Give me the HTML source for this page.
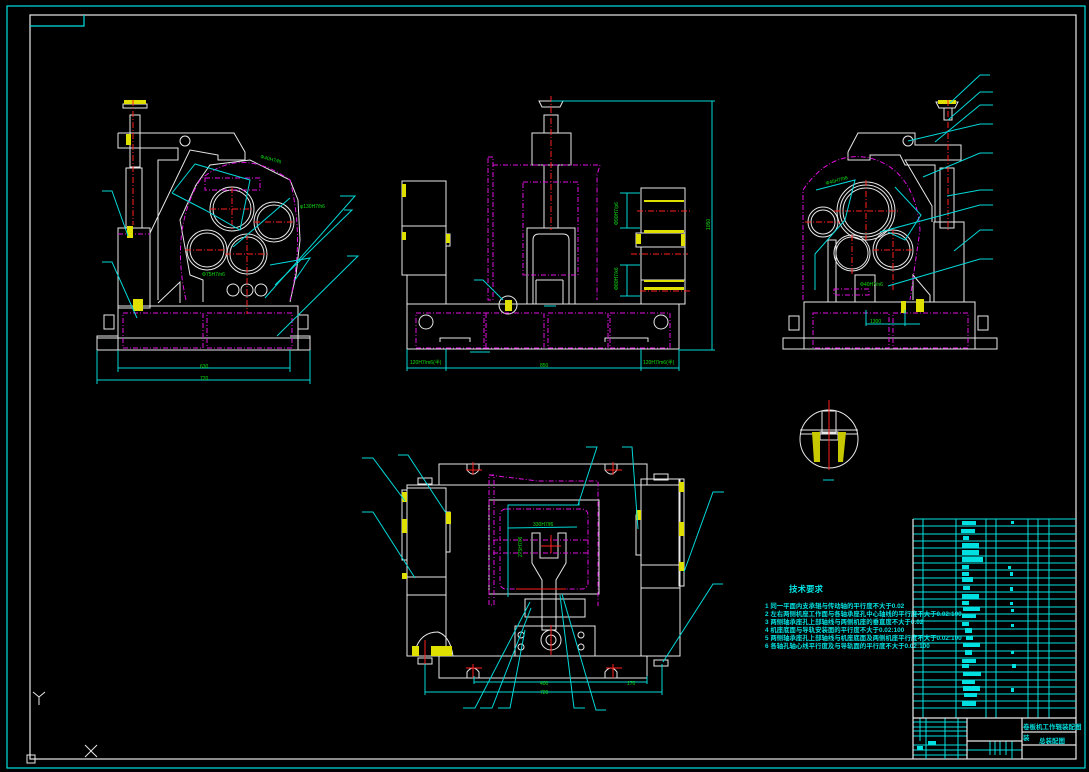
<!DOCTYPE html>
<html><head><meta charset="utf-8"><style>
html,body{margin:0;padding:0;background:#000;}
svg{display:block}
text{font-family:"Liberation Sans","Noto Sans CJK SC",sans-serif;}
</style></head><body>
<svg width="1089" height="772" viewBox="0 0 1089 772" xmlns="http://www.w3.org/2000/svg">
<rect width="1089" height="772" fill="#000"/>
<!-- frames -->
<rect x="7" y="6" width="1078" height="762" fill="none" stroke="#00e0e0" stroke-width="1.2"/>
<rect x="30" y="15" width="1046" height="744" fill="none" stroke="#e8e8e8" stroke-width="1.2"/>
<polyline points="30,26 84,26 84,15" fill="none" stroke="#00e0e0" stroke-width="1.2"/>
<!-- UCS -->
<g stroke="#e8e8e8" fill="none" stroke-width="1">
<rect x="27" y="755" width="8" height="8"/>
<line x1="33" y1="692" x2="39" y2="697"/><line x1="45" y1="692" x2="39" y2="697"/><line x1="39" y1="697" x2="39" y2="705"/>
<line x1="85" y1="745" x2="97" y2="757"/><line x1="97" y1="745" x2="85" y2="757"/>
</g>

<!-- ========== LEFT VIEW ========== -->
<g fill="none" stroke="#e8e8e8" stroke-width="1">
<rect x="97" y="338" width="213" height="12"/>
<polyline points="97,338 97,336 118,336"/><polyline points="310,338 310,336 290,336"/>
<rect x="118" y="306" width="180" height="44"/>
<rect x="118" y="228" width="32" height="80"/>
<rect x="126" y="168" width="16" height="60"/>
<polyline points="118,133 234,133 245,152 245,160 218,160 218,155 190,150 150,233 150,306"/>
<polyline points="118,133 118,148 178,148 178,160 158,160 158,300"/>
<rect x="130" y="115" width="10" height="52"/>
<path d="M123 104 h24 v4 h-24z"/>
<circle cx="185" cy="141" r="5"/>
<rect x="104" y="315" width="10" height="14"/><rect x="298" y="315" width="10" height="14"/>
<polyline points="158,303 180,282 180,303"/>
<circle cx="232" cy="209" r="22"/><circle cx="232" cy="209" r="19"/>
<circle cx="274" cy="222" r="20"/><circle cx="274" cy="222" r="17"/>
<circle cx="207" cy="250" r="20"/><circle cx="207" cy="250" r="17"/>
<circle cx="247" cy="254" r="20"/><circle cx="247" cy="254" r="17"/>
<circle cx="233" cy="290" r="6"/><circle cx="247" cy="290" r="6"/><circle cx="261" cy="290" r="6"/>
<polyline points="203,302 203,280 190,275 180,220 196,185 210,165 250,160 290,180 298,200 300,240 296,275 290,302"/>
</g>
<g fill="none" stroke="#e010e0" stroke-width="1" stroke-dasharray="5,2,1,2">
<path d="M186 300 Q170 230 200 180 Q240 145 290 180 Q305 240 290 300"/>
<rect x="123" y="313" width="80" height="35"/><rect x="207" y="313" width="85" height="35"/>
<rect x="205" y="178" width="55" height="12"/>
<line x1="118" y1="234" x2="150" y2="234"/>
</g>
<g fill="#e0e000"><rect x="124" y="100" width="22" height="4"/><rect x="127" y="226" width="6" height="12"/><rect x="133" y="299" width="10" height="12"/><rect x="126" y="134" width="5" height="11"/></g>
<g stroke="#ff2020" stroke-width="1" stroke-dasharray="6,2,1,2">
<line x1="133" y1="100" x2="133" y2="225"/><line x1="210" y1="209" x2="254" y2="209"/><line x1="232" y1="187" x2="232" y2="231"/>
<line x1="254" y1="222" x2="294" y2="222"/><line x1="185" y1="250" x2="229" y2="250"/><line x1="225" y1="254" x2="269" y2="254"/><line x1="247" y1="234" x2="247" y2="314"/>
</g>
<g fill="none" stroke="#00d8d8" stroke-width="1">
<line x1="97" y1="350" x2="97" y2="384"/><line x1="310" y1="350" x2="310" y2="384"/><line x1="118" y1="350" x2="118" y2="372"/><line x1="290" y1="350" x2="290" y2="372"/>
<line x1="118" y1="368" x2="290" y2="368"/><line x1="97" y1="380" x2="310" y2="380"/>
<polyline points="102,191 112,191 128,236"/><polyline points="102,262 112,262 137,318"/>
<polyline points="172,193 195,164 250,180 240,230 205,210 172,193"/>
<polyline points="340,196 355,196 265,298"/><polyline points="344,210 352,210 275,285"/><polyline points="347,256 358,256 277,336"/>
<polyline points="233,247 290,198"/><polyline points="270,265 310,258 295,280"/>
</g>
<g fill="#10e010" font-size="5"><text x="260" y="158" transform="rotate(15 260 158)">Φ40H7/f6</text><text x="300" y="208">φ130H7/h6</text><text x="202" y="276">Φ75H7/n6</text><text x="200" y="368">630</text><text x="200" y="380">720</text></g>

<!-- ========== MIDDLE VIEW ========== -->
<g fill="none" stroke="#e8e8e8" stroke-width="1">
<rect x="407" y="304" width="272" height="45"/>
<rect x="402" y="181" width="44" height="45"/><rect x="402" y="226" width="44" height="49"/>
<rect x="407" y="275" width="39" height="29"/>
<rect x="446" y="234" width="4" height="12"/>
<rect x="527" y="228" width="48" height="76"/>
<path d="M533 304 V240 Q533 234 539 234 H563 Q569 234 569 240 V304"/>
<rect x="532" y="133" width="39" height="32"/>
<rect x="544" y="115" width="14" height="18"/><rect x="544" y="165" width="14" height="63"/>
<path d="M539 101 h24 l-3 6 h-18z"/>
<rect x="641" y="188" width="44" height="45"/><rect x="636" y="233" width="49" height="14"/>
<rect x="641" y="247" width="44" height="33"/><rect x="641" y="280" width="44" height="24"/>
<circle cx="426" cy="322" r="7"/><circle cx="661" cy="322" r="7"/>
<polyline points="440,342 440,338 470,338 470,342"/><polyline points="605,342 605,338 648,338 648,342"/>
<line x1="536" y1="280" x2="536" y2="304"/><line x1="563" y1="280" x2="563" y2="304"/><line x1="536" y1="280" x2="563" y2="280"/>
<circle cx="508" cy="305" r="9"/>
</g>
<g fill="none" stroke="#e010e0" stroke-width="1" stroke-dasharray="5,2,1,2">
<rect x="488" y="157" width="5" height="143"/>
<polyline points="493,165 600,165 597,175 597,300"/>
<rect x="523" y="182" width="55" height="93"/>
<rect x="416" y="313" width="70" height="35"/><rect x="484" y="313" width="60" height="35"/><rect x="548" y="313" width="60" height="35"/><rect x="610" y="313" width="60" height="35"/>
</g>
<g fill="#e0e000"><rect x="402" y="184" width="4" height="13"/><rect x="402" y="232" width="4" height="8"/><rect x="446" y="234" width="4" height="9"/><rect x="636" y="234" width="5" height="10"/><rect x="644" y="230" width="40" height="3"/><rect x="681" y="234" width="4" height="12"/><rect x="644" y="280" width="40" height="2"/><rect x="644" y="287" width="40" height="3"/><rect x="644" y="200" width="40" height="2"/><rect x="505" y="300" width="7" height="11"/></g>
<g stroke="#ff2020" stroke-width="1" stroke-dasharray="6,2,1,2">
<line x1="551" y1="96" x2="551" y2="230"/><line x1="637" y1="211" x2="690" y2="211"/><line x1="631" y1="254" x2="688" y2="254"/><line x1="640" y1="291" x2="690" y2="291"/>
</g>
<g fill="none" stroke="#00d8d8" stroke-width="1">
<line x1="551" y1="101" x2="715" y2="101"/><line x1="712" y1="101" x2="712" y2="350"/><line x1="679" y1="350" x2="715" y2="350"/>
<line x1="407" y1="349" x2="407" y2="371"/><line x1="679" y1="349" x2="679" y2="371"/><line x1="446" y1="349" x2="446" y2="371"/><line x1="641" y1="349" x2="641" y2="371"/>
<line x1="407" y1="368" x2="679" y2="368"/>
<line x1="620" y1="193" x2="640" y2="193"/><line x1="620" y1="228" x2="640" y2="228"/><line x1="627" y1="193" x2="627" y2="228"/>
<line x1="620" y1="265" x2="640" y2="265"/><line x1="620" y1="296" x2="640" y2="296"/><line x1="627" y1="265" x2="627" y2="296"/>
<polyline points="474,280 483,280 503,300"/>
<line x1="544" y1="306" x2="556" y2="306"/><line x1="470" y1="352" x2="490" y2="352"/>
</g>
<g fill="#10e010" font-size="5"><text x="410" y="364">120H7/m6(半)</text><text x="540" y="367">850</text><text x="643" y="364">120H7/m6(半)</text><text x="710" y="230" transform="rotate(-90 710 230)">1050</text><text x="618" y="225" transform="rotate(-90 618 225)">Φ90H7/p6</text><text x="618" y="290" transform="rotate(-90 618 290)">Φ80H7/k6</text></g>

<!-- ========== RIGHT VIEW ========== -->
<g fill="none" stroke="#e8e8e8" stroke-width="1">
<rect x="783" y="338" width="214" height="11"/>
<rect x="804" y="302" width="171" height="47"/>
<rect x="934" y="222" width="30" height="80"/>
<rect x="940" y="168" width="14" height="60"/>
<polyline points="848,152 858,133 915,133 915,145 961,145 961,160 915,160 905,160 932,206 932,222"/>
<polyline points="848,152 848,160 870,160 870,155 900,155 905,165 935,165 935,222"/>
<circle cx="908" cy="141" r="5"/>
<path d="M936 102 h22 l-3 6 h-16z"/><rect x="944" y="108" width="8" height="12"/>
<rect x="789" y="316" width="10" height="14"/><rect x="978" y="316" width="10" height="14"/>
<circle cx="866" cy="211" r="29"/><circle cx="866" cy="211" r="26"/><circle cx="866" cy="211" r="23"/>
<circle cx="823" cy="222" r="15"/><circle cx="823" cy="222" r="12"/>
<circle cx="852" cy="253" r="18"/><circle cx="852" cy="253" r="16"/>
<circle cx="893" cy="250" r="20"/><circle cx="893" cy="250" r="17"/>
<polyline points="828,302 828,240 836,240 836,302"/><polyline points="855,302 855,275 875,275 875,302"/>
<polyline points="913,300 913,275 930,295 930,302"/>
</g>
<g fill="none" stroke="#e010e0" stroke-width="1" stroke-dasharray="5,2,1,2">
<path d="M803 300 V190 Q830 150 870 158 Q915 170 920 230 L910 300"/>
<rect x="813" y="313" width="76" height="35"/><rect x="893" y="313" width="75" height="35"/>
<rect x="834" y="289" width="35" height="6"/>
</g>
<g fill="#e0e000"><rect x="901" y="301" width="5" height="12"/><rect x="916" y="299" width="8" height="13"/><rect x="938" y="100" width="18" height="4"/></g>
<g stroke="#ff2020" stroke-width="1" stroke-dasharray="6,2,1,2">
<line x1="948" y1="100" x2="948" y2="230"/><line x1="834" y1="211" x2="898" y2="211"/><line x1="866" y1="180" x2="866" y2="240"/>
<line x1="805" y1="222" x2="840" y2="222"/><line x1="873" y1="250" x2="913" y2="250"/><line x1="893" y1="230" x2="893" y2="290"/><line x1="852" y1="235" x2="852" y2="275"/>
</g>
<g fill="none" stroke="#00d8d8" stroke-width="1">
<polyline points="990,75 980,75 950,103"/><polyline points="993,92 980,92 948,120"/><polyline points="993,105 980,105 935,142"/><polyline points="993,124 980,124 908,141"/>
<polyline points="993,153 980,153 923,177"/><polyline points="993,190 980,190 947,196"/><polyline points="993,205 980,205 880,232"/>
<polyline points="993,230 980,230 954,251"/><polyline points="993,259 980,259 888,286"/>
<polyline points="816,190 855,180 845,220 815,254 815,255 815,290"/>
<line x1="866" y1="310" x2="866" y2="326"/><line x1="905" y1="310" x2="905" y2="326"/><line x1="866" y1="324" x2="920" y2="324"/>
<polyline points="895,187 921,215 905,240 888,232"/>
</g>
<g fill="#10e010" font-size="5"><text x="826" y="185" transform="rotate(-15 826 185)">Φ45H7/h6</text><text x="860" y="286">Φ40H7/n6</text><text x="870" y="323">1300</text></g>

<!-- detail circle -->
<g fill="none" stroke="#e8e8e8" stroke-width="1">
<circle cx="829" cy="439" r="29"/><line x1="800" y1="430" x2="858" y2="430"/><line x1="800" y1="434" x2="858" y2="434"/>
<rect x="822" y="411" width="14" height="22"/><rect x="820" y="432" width="18" height="8"/>
</g>
<path d="M812 432 L820 432 L820 462 L814 462Z M838 432 L846 432 L843 462 L838 462Z" fill="#c8c800"/>
<line x1="829" y1="400" x2="829" y2="470" stroke="#ff2020" stroke-width="1"/>
<line x1="823" y1="480" x2="834" y2="480" stroke="#00d8d8"/>

<!-- ========== BOTTOM VIEW ========== -->
<g fill="none" stroke="#e8e8e8" stroke-width="1">
<rect x="439" y="464" width="208" height="21"/>
<rect x="407" y="485" width="273" height="171"/>
<rect x="439" y="656" width="208" height="22"/>
<rect x="407" y="488" width="39" height="168"/><rect x="641" y="479" width="39" height="177"/>
<rect x="402" y="490" width="5" height="70"/><rect x="679" y="479" width="5" height="107"/>
<rect x="446" y="512" width="4" height="40"/><rect x="636" y="515" width="5" height="40"/>
<line x1="407" y1="577" x2="446" y2="577"/><line x1="407" y1="595" x2="446" y2="595"/><line x1="641" y1="565" x2="680" y2="565"/><line x1="641" y1="588" x2="680" y2="588"/>
<rect x="489" y="500" width="110" height="94"/>
<path d="M532 533 h8 v25 h18 v-25 h8 v30 l-10 17 v50 h-14 v-50 l-10 -17z"/>
<rect x="525" y="599" width="60" height="18"/><rect x="515" y="626" width="80" height="30"/>
<circle cx="551" cy="640" r="10"/><circle cx="551" cy="640" r="5"/>
<circle cx="521" cy="635" r="3"/><circle cx="521" cy="647" r="3"/><circle cx="581" cy="635" r="3"/><circle cx="581" cy="647" r="3"/>
<path d="M414 656 Q418 632 438 632 Q450 636 453 656"/>
<path d="M418 478 h14 v6 h-14z M654 474 h14 v6 h-14z M418 658 h14 v6 h-14z M654 660 h14 v6 h-14z"/>
<path d="M467 464 v6 q6 8 12 0 v-6 M605 464 v6 q6 8 12 0 v-6 M467 678 v-6 q6 -8 12 0 v6 M605 678 v-6 q6 -8 12 0 v6"/>
</g>
<g fill="none" stroke="#e010e0" stroke-width="1" stroke-dasharray="5,2,1,2">
<polyline points="489,475 538,481 598,481 598,606"/>
<rect x="489" y="475" width="5" height="130"/>
<rect x="500" y="509" width="88" height="80" rx="6"/>
<line x1="493" y1="540" x2="590" y2="540"/><line x1="493" y1="553" x2="590" y2="553"/>
</g>
<g fill="#e0e000"><rect x="402" y="492" width="5" height="10"/><rect x="402" y="519" width="5" height="14"/><rect x="402" y="573" width="5" height="6"/><rect x="446" y="512" width="5" height="12"/><rect x="636" y="510" width="5" height="10"/><rect x="679" y="482" width="5" height="10"/><rect x="679" y="522" width="5" height="14"/><rect x="679" y="562" width="5" height="9"/><rect x="412" y="646" width="7" height="10"/><rect x="431" y="646" width="21" height="10"/></g>
<g stroke="#ff2020" stroke-width="1">
<line x1="473" y1="462" x2="473" y2="475"/><line x1="466" y1="470" x2="482" y2="470"/><line x1="613" y1="462" x2="613" y2="475"/><line x1="606" y1="470" x2="622" y2="470"/>
<line x1="473" y1="664" x2="473" y2="678"/><line x1="466" y1="668" x2="482" y2="668"/><line x1="613" y1="664" x2="613" y2="678"/><line x1="606" y1="668" x2="622" y2="668"/>
<line x1="551" y1="625" x2="551" y2="655"/><line x1="551" y1="535" x2="551" y2="553"/><line x1="541" y1="546" x2="561" y2="546"/><line x1="425" y1="640" x2="425" y2="668"/>
<line x1="516" y1="589" x2="566" y2="589"/>
</g>
<g fill="none" stroke="#00d8d8" stroke-width="1">
<line x1="425" y1="664" x2="425" y2="695"/><line x1="662" y1="664" x2="662" y2="695"/><line x1="425" y1="692" x2="662" y2="692"/>
<line x1="474" y1="676" x2="474" y2="684"/><line x1="647" y1="676" x2="647" y2="684"/><line x1="474" y1="682" x2="647" y2="682"/>
<polyline points="508,597 508,505 579,505 579,500"/><polyline points="508,528 577,527"/>
<polyline points="362,458 373,458 405,501"/><polyline points="398,455 408,455 446,513"/><polyline points="362,512 373,512 415,578"/>
<polyline points="586,447 597,447 578,505"/><polyline points="622,447 632,447 638,529"/>
<polyline points="724,492 713,492 684,572"/><polyline points="723,584 713,584 663,662"/>
<polyline points="463,708 475,708 530,602"/><polyline points="480,708 492,708 531,608"/><polyline points="498,708 510,708 525,630"/>
<polyline points="585,708 574,708 560,595"/><polyline points="606,710 596,710 562,594"/>
</g>
<g fill="#10e010" font-size="5"><text x="533" y="526">330H7/f6</text><text x="522" y="557" transform="rotate(-90 522 557)">275H7/f6</text><text x="540" y="685">400</text><text x="540" y="694">720</text><text x="627" y="685">170</text></g>

<!-- ========== notes ========== -->
<g fill="#00e0e0" font-size="6.4" font-weight="bold">
<text x="789" y="592" font-size="8.5">技术要求</text>
<text x="765" y="608">1  同一平面内支承辊与传动轴的平行度不大于0.02</text>
<text x="765" y="616">2  左右两侧机座工作面与各轴承座孔中心轴线的平行度不大于0.02:100</text>
<text x="765" y="624">3  两侧轴承座孔上部轴线与两侧机座的垂直度不大于0.02</text>
<text x="765" y="632">4  机座底面与导轨安装面的平行度不大于0.02:100</text>
<text x="765" y="640">5  两侧轴承座孔上部轴线与机座底面及两侧机座平行度不大于0.02:100</text>
<text x="765" y="648">6  各轴孔轴心线平行度及与导轨面的平行度不大于0.02:100</text>
</g>

<!-- ========== title table ========== -->
<g stroke="#00e0e0" stroke-width="1" fill="none">
<path d="M913 519 H1076 M913 526 H1076 M913 534 H1076 M913 541 H1076 M913 548 H1076 M913 556 H1076 M913 563 H1076 M913 570 H1076 M913 578 H1076 M913 585 H1076 M913 592 H1076 M913 599 H1076 M913 607 H1076 M913 614 H1076 M913 621 H1076 M913 629 H1076 M913 636 H1076 M913 643 H1076 M913 651 H1076 M913 658 H1076 M913 665 H1076 M913 672 H1076 M913 680 H1076 M913 687 H1076 M913 694 H1076 M913 701 H1076 M913 708 H1076"/>
<path d="M923 519 V718 M956 519 V718 M986 519 V718 M996 519 V718 M1028 519 V718 M1038 519 V718 M1049 519 V718"/>
<path d="M913 722 H967 M913 727 H967 M913 731 H967 M913 736 H967 M913 745 H967 M913 750 H967 M913 755 H967 M967 750 H1022"/>
<path d="M920 718 V741 M926 718 V759 M945 718 V759 M958 718 V759 M990 741 V755 M995 741 V755 M1000 741 V755 M1006 741 V755 M1012 741 V759"/>
</g>
<g stroke="#e8e8e8" stroke-width="1.2" fill="none">
<line x1="913" y1="519" x2="913" y2="759"/><line x1="913" y1="718" x2="1076" y2="718"/>
<line x1="967" y1="718" x2="967" y2="759"/><line x1="1022" y1="718" x2="1022" y2="759"/>
<line x1="967" y1="741" x2="1022" y2="741"/><line x1="1022" y1="732" x2="1076" y2="732"/><line x1="1022" y1="745" x2="1076" y2="745"/>
</g>
<g fill="#00e0e0">
<rect x="962" y="521" width="14" height="4"/><rect x="961" y="529" width="14" height="4"/><rect x="963" y="536" width="6" height="4"/><rect x="962" y="543" width="17" height="5"/><rect x="962" y="550" width="17" height="5"/><rect x="962" y="557" width="21" height="5"/><rect x="962" y="565" width="7" height="4"/><rect x="962" y="572" width="7" height="4"/><rect x="962" y="577" width="11" height="5"/><rect x="963" y="586" width="7" height="4"/><rect x="962" y="594" width="17" height="5"/><rect x="962" y="601" width="7" height="4"/><rect x="963" y="607" width="17" height="4"/><rect x="962" y="614" width="14" height="4"/><rect x="962" y="622" width="7" height="4"/><rect x="965" y="628" width="7" height="5"/><rect x="966" y="636" width="7" height="4"/><rect x="963" y="643" width="17" height="4"/><rect x="965" y="650" width="7" height="5"/><rect x="962" y="659" width="14" height="4"/><rect x="962" y="664" width="7" height="4"/><rect x="963" y="672" width="18" height="4"/><rect x="962" y="680" width="13" height="4"/><rect x="963" y="686" width="17" height="5"/><rect x="964" y="693" width="13" height="4"/><rect x="962" y="701" width="14" height="5"/>
<rect x="1011" y="521" width="3" height="3"/><rect x="1008" y="566" width="3" height="3"/><rect x="1010" y="572" width="3" height="4"/><rect x="1010" y="587" width="3" height="4"/><rect x="1010" y="602" width="3" height="3"/><rect x="1011" y="609" width="3" height="3"/><rect x="1011" y="624" width="3" height="3"/><rect x="1011" y="651" width="3" height="3"/><rect x="1012" y="664" width="4" height="4"/><rect x="1011" y="688" width="3" height="4"/>
<rect x="917" y="746" width="6" height="4"/><rect x="928" y="741" width="8" height="4"/>
</g>
<g fill="#00e0e0" font-size="6.5" font-weight="bold"><text x="1023" y="729">卷板机工作辊装配图</text><text x="1023" y="740">装</text><text x="1039" y="743">总装配图</text></g>
</svg>
</body></html>
